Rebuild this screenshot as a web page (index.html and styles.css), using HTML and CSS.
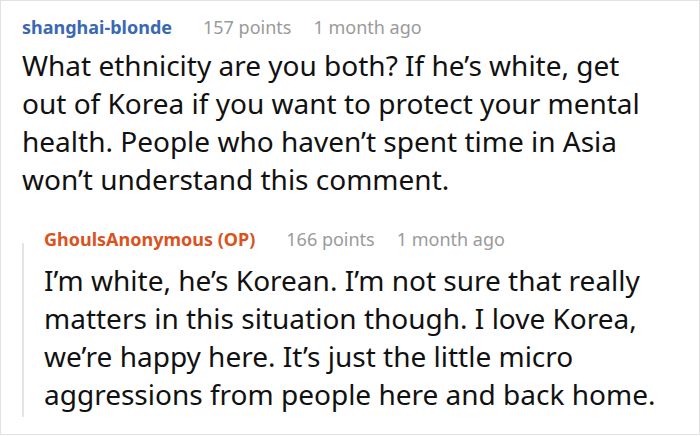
FILE: index.html
```html
<!DOCTYPE html>
<html>
<head>
<meta charset="utf-8">
<link rel="stylesheet" href="styles.css">
</head>
<body>
<div class="frame">
  <div class="comment">
    <div class="meta">
      <span class="user user-blue">shanghai-blonde</span>
      <span class="points">157 points</span>
      <span class="time">1 month ago</span>
    </div>
    <p class="text text-main">What ethnicity are you both? If he’s white, get out of Korea if you want to protect your mental health. People who haven’t spent time in Asia won’t understand this comment.</p>
  </div>
  <div class="reply">
    <div class="rail"></div>
    <div class="reply-body">
      <div class="meta">
        <span class="user user-orange">GhoulsAnonymous (OP)</span>
        <span class="points">166 points</span>
        <span class="time">1 month ago</span>
      </div>
      <p class="text">I’m white, he’s Korean. I’m not sure that really matters in this situation though. I love Korea, we’re happy here. It’s just the little micro aggressions from people here and back home.</p>
    </div>
  </div>
</div>
</body>
</html>
```

FILE: styles.css
```css
* { box-sizing: border-box; }
html, body {
  margin: 0;
  padding: 0;
  background: #fff;
}
body {
  font-family: "Noto Sans", "Open Sans", sans-serif;
  color: #111;
}
.frame {
  width: 700px;
  height: 435px;
  border: 1px solid #e2e2e2;
  padding: 14px 10px 0 21px;
  overflow: hidden;
}
.meta {
  display: flex;
  align-items: baseline;
  font-size: 18px;
  line-height: 24px;
  white-space: nowrap;
}
.user {
  font-weight: 700;
  margin-right: 31px;
}
.user-blue { color: #3a69b3; }
.user-orange { color: #d9531e; }
.points, .time { color: #9a9a9a; }
.points { margin-right: 22px; }
.text {
  margin: 7px 0 0 0;
  font-size: 28px;
  line-height: 38px;
}
.text-main {
  max-width: 638px;
}
.reply {
  display: flex;
  margin-top: 29px;
}
.rail {
  width: 2px;
  background: #e4e4e4;
  margin-top: 16px;
  flex: none;
}
.reply-body {
  padding-left: 20px;
  padding-bottom: 4px;
  flex: 1;
}
.reply-body .text {
  margin-top: 10px;
}
```
